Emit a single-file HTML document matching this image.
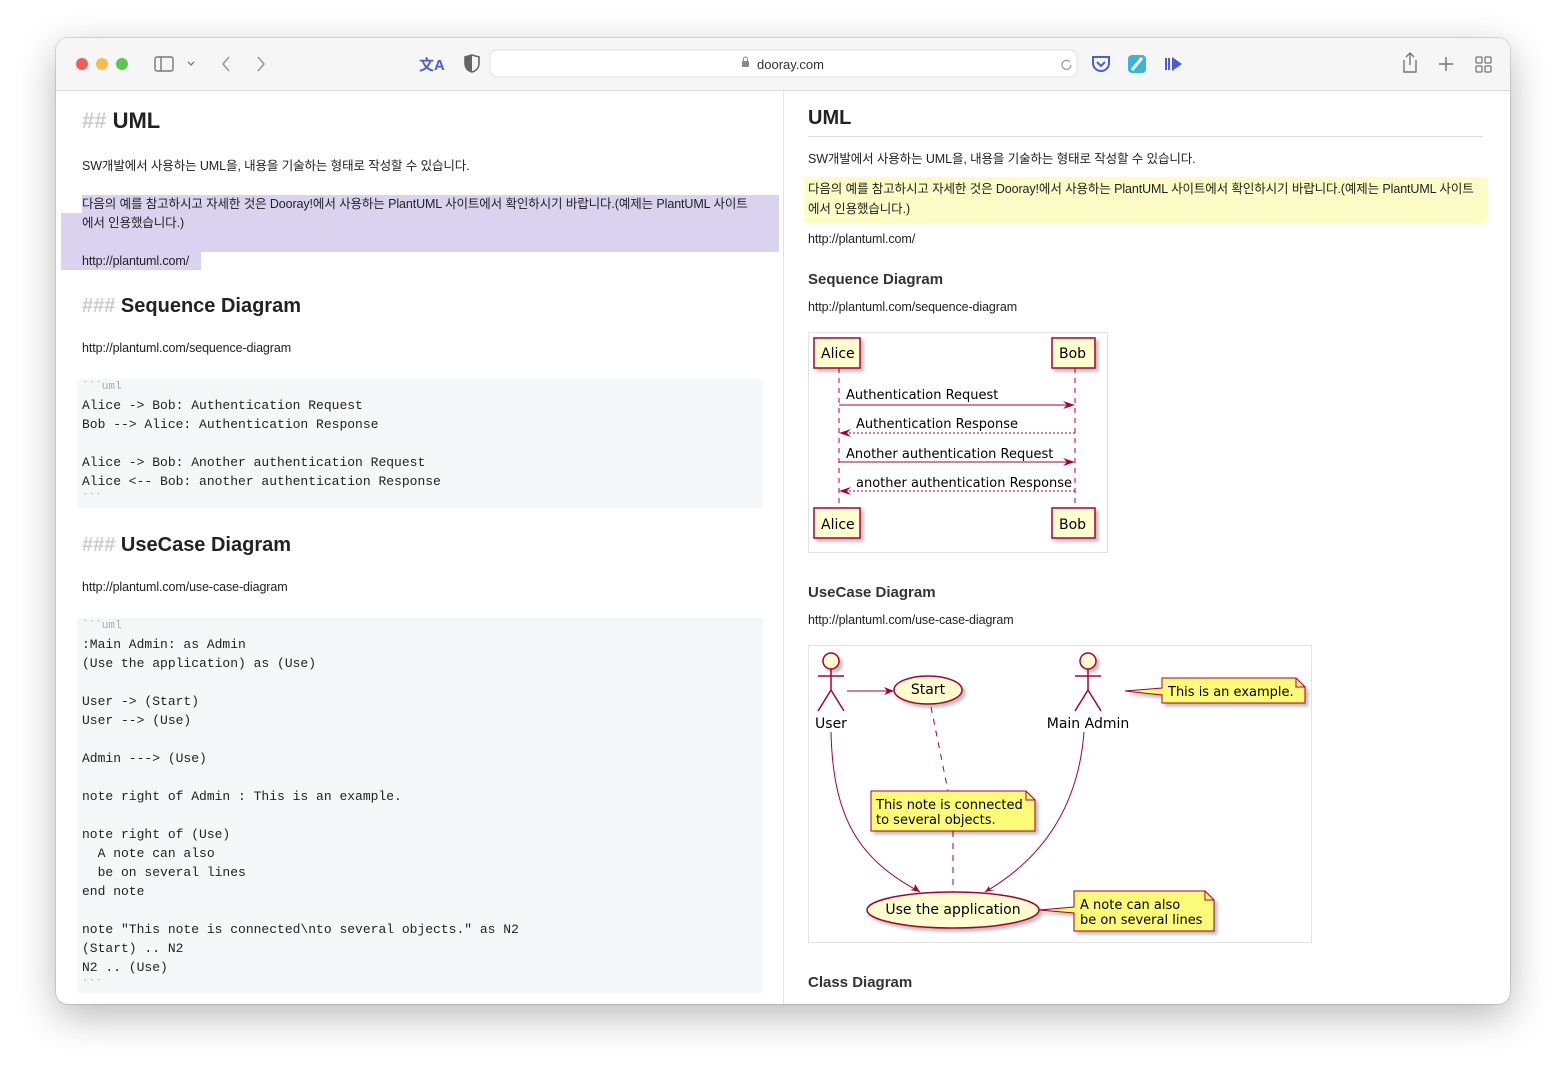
<!DOCTYPE html>
<html><head><meta charset="utf-8"><style>
*{margin:0;padding:0;box-sizing:border-box}
body{width:1566px;height:1078px;background:#fff;position:relative;overflow:hidden;font-family:"Liberation Sans","Noto Sans CJK KR",sans-serif;color:#222}
.win{position:absolute;left:56px;top:38px;width:1454px;height:966px;border-radius:12px;background:#fff;box-shadow:0 12px 40px rgba(0,0,0,.28),0 0 0 1px rgba(0,0,0,.12);overflow:hidden}
.tb{position:absolute;left:0;top:0;width:100%;height:53px;background:#f6f6f6;border-bottom:1px solid #dcdcdc}
.t{position:absolute;white-space:nowrap;font-size:12.5px;letter-spacing:-0.1px;line-height:18px}
.m{position:absolute;white-space:pre;font-family:"Liberation Mono",monospace;font-size:13px;line-height:18px;color:#222}
.g{color:#aaa;font-size:11px}
.h{position:absolute;white-space:nowrap;font-weight:bold}
.hl{position:absolute;background:#d9d3ef}
.code{position:absolute;left:77px;width:686px;background:#f6f7f9}
</style></head><body>
<div class="win">
 <div class="tb">
  <svg width="1454" height="53" style="position:absolute;left:0;top:0">
   <circle cx="26" cy="26" r="6" fill="#ee5f57"/><circle cx="46" cy="26" r="6" fill="#f5bd4f"/><circle cx="66" cy="26" r="6" fill="#5fc454"/>
   <rect x="99" y="19" width="18" height="14" rx="2" fill="none" stroke="#777" stroke-width="1.4"/><line x1="105" y1="19" x2="105" y2="33" stroke="#777" stroke-width="1.4"/>
   <path d="M132 24l3 3 3-3" fill="none" stroke="#777" stroke-width="1.3"/>
   <path d="M173 19l-6 7 6 7" fill="none" stroke="#999" stroke-width="1.6"/>
   <path d="M202 19l6 7-6 7" fill="none" stroke="#999" stroke-width="1.6"/>
   <text x="363" y="32" font-size="15" font-weight="bold" fill="#4a5cdb" font-family="Liberation Sans, Noto Sans CJK SC, sans-serif">文A</text>
   <path d="M409 19l7-2 7 2v6c0 5-3 8-7 9-4-1-7-4-7-9z" fill="none" stroke="#666" stroke-width="1.6"/><path d="M416 17v17c-4-1-7-4-7-9v-6z" fill="#666"/>
   <rect x="434" y="12" width="587" height="27" rx="7" fill="#fff" stroke="#e0e0e0"/>
   <rect x="686" y="23" width="7" height="6" rx="1" fill="#888"/><path d="M687.5 23v-2a2 2 0 0 1 4 0v2" fill="none" stroke="#888"/>
   <text x="701" y="31" font-size="13" fill="#333" font-family="Liberation Sans">dooray.com</text>
   <path d="M1014 24a4.5 4.5 0 1 0 1 3" fill="none" stroke="#999" stroke-width="1.2"/>
   <path d="M1037 19h16v6a8 8 0 0 1-16 0z" fill="none" stroke="#4a5cdb" stroke-width="2"/><path d="M1041 24l4 4 4-4" fill="none" stroke="#4a5cdb" stroke-width="2"/>
   <rect x="1072" y="17" width="18" height="18" rx="4" fill="#3bb4d8"/><path d="M1076 32l10-12" stroke="#fff" stroke-width="3"/>
   <path d="M1110 20v12M1113 20v12" stroke="#4a5cdb" stroke-width="2"/><path d="M1116 19l10 7-10 7z" fill="#4a5cdb"/>
   <path d="M1348 22v12h12V22M1354 15v12M1350 19l4-4 4 4" fill="none" stroke="#777" stroke-width="1.4"/>
   <path d="M1390 19v14M1383 26h14" stroke="#777" stroke-width="1.5"/>
   <g fill="none" stroke="#777" stroke-width="1.3"><rect x="1420" y="19" width="6" height="6" rx="1"/><rect x="1429" y="19" width="6" height="6" rx="1"/><rect x="1420" y="28" width="6" height="6" rx="1"/><rect x="1429" y="28" width="6" height="6" rx="1"/></g>
  </svg>
 </div>
 <div style="position:absolute;left:727px;top:53px;width:1px;height:913px;background:#e3e3e3"></div>
</div>

<div class="h" style="left:82px;top:108px;font-size:22px;line-height:26px"><span style="color:#ccc">##</span> UML</div>
<div class="t" style="left:82px;top:157px">SW개발에서 사용하는 UML을, 내용을 기술하는 형태로 작성할 수 있습니다.</div>
<div class="hl" style="left:82px;top:195px;width:697px;height:18px"></div>
<div class="hl" style="left:61px;top:213px;width:718px;height:39px"></div>
<div class="hl" style="left:61px;top:252px;width:140px;height:18px"></div>
<div class="t" style="left:82px;top:195px">다음의 예를 참고하시고 자세한 것은 Dooray!에서 사용하는 PlantUML 사이트에서 확인하시기 바랍니다.(예제는 PlantUML 사이트</div>
<div class="t" style="left:82px;top:214px">에서 인용했습니다.)</div>
<div class="t" style="left:82px;top:252px">http://plantuml.com/</div>
<div class="h" style="left:82px;top:294px;font-size:20px;line-height:24px"><span style="color:#ccc">###</span> Sequence Diagram</div>
<div class="t" style="left:82px;top:339px">http://plantuml.com/sequence-diagram</div>
<div class="code" style="top:379px;height:129px"></div>
<div class="m g" style="left:82px;top:378px">&#96;&#96;&#96;uml</div>
<div class="m" style="left:82px;top:397px">Alice -&gt; Bob: Authentication Request</div>
<div class="m" style="left:82px;top:416px">Bob --&gt; Alice: Authentication Response</div>
<div class="m" style="left:82px;top:454px">Alice -&gt; Bob: Another authentication Request</div>
<div class="m" style="left:82px;top:473px">Alice &lt;-- Bob: another authentication Response</div>
<div class="m g" style="left:82px;top:490px">&#96;&#96;&#96;</div>
<div class="h" style="left:82px;top:533px;font-size:20px;line-height:24px"><span style="color:#ccc">###</span> UseCase Diagram</div>
<div class="t" style="left:82px;top:578px">http://plantuml.com/use-case-diagram</div>
<div class="code" style="top:618px;height:375px"></div>
<div class="m g" style="left:82px;top:617px">&#96;&#96;&#96;uml</div>
<div class="m" style="left:82px;top:636px">:Main Admin: as Admin</div>
<div class="m" style="left:82px;top:655px">(Use the application) as (Use)</div>
<div class="m" style="left:82px;top:693px">User -&gt; (Start)</div>
<div class="m" style="left:82px;top:712px">User --&gt; (Use)</div>
<div class="m" style="left:82px;top:750px">Admin ---&gt; (Use)</div>
<div class="m" style="left:82px;top:788px">note right of Admin : This is an example.</div>
<div class="m" style="left:82px;top:826px">note right of (Use)</div>
<div class="m" style="left:82px;top:845px">  A note can also</div>
<div class="m" style="left:82px;top:864px">  be on several lines</div>
<div class="m" style="left:82px;top:883px">end note</div>
<div class="m" style="left:82px;top:921px">note "This note is connected\nto several objects." as N2</div>
<div class="m" style="left:82px;top:940px">(Start) .. N2</div>
<div class="m" style="left:82px;top:959px">N2 .. (Use)</div>
<div class="m g" style="left:82px;top:976px">&#96;&#96;&#96;</div>

<div class="h" style="left:808px;top:106px;font-size:20px;line-height:24px">UML</div>
<div style="position:absolute;left:808px;top:136px;width:675px;height:1px;background:#ddd"></div>
<div class="t" style="left:808px;top:150px">SW개발에서 사용하는 UML을, 내용을 기술하는 형태로 작성할 수 있습니다.</div>
<div style="position:absolute;left:804px;top:177px;width:684px;height:46px;background:#fcfcc6;border-radius:3px"></div>
<div class="t" style="left:808px;top:180px">다음의 예를 참고하시고 자세한 것은 Dooray!에서 사용하는 PlantUML 사이트에서 확인하시기 바랍니다.(예제는 PlantUML 사이트</div>
<div class="t" style="left:808px;top:200px">에서 인용했습니다.)</div>
<div class="t" style="left:808px;top:230px">http://plantuml.com/</div>
<div class="h" style="left:808px;top:271px;font-size:15px;line-height:18px;color:#333">Sequence Diagram</div>
<div class="t" style="left:808px;top:298px">http://plantuml.com/sequence-diagram</div>
<div class="h" style="left:808px;top:584px;font-size:15px;line-height:18px;color:#333">UseCase Diagram</div>
<div class="t" style="left:808px;top:611px">http://plantuml.com/use-case-diagram</div>
<div class="h" style="left:808px;top:974px;font-size:15px;line-height:18px;color:#333">Class Diagram</div>

<svg width="1566" height="1078" style="position:absolute;left:0;top:0" font-family="DejaVu Sans, sans-serif" font-size="13">
 <defs><filter id="s" x="-20%" y="-20%" width="150%" height="150%"><feDropShadow dx="3" dy="3" stdDeviation="1.5" flood-color="#000" flood-opacity=".25"/></filter></defs>
 <rect x="808.5" y="332.5" width="299" height="220" fill="none" stroke="#e3e3e3"/>
 <g stroke="#a80036" stroke-dasharray="5,5"><line x1="839" y1="368" x2="839" y2="508"/><line x1="1075" y1="368" x2="1075" y2="508"/></g>
 <g fill="#fefece" stroke="#a80036" stroke-width="1.5" filter="url(#s)">
  <rect x="814" y="338" width="46" height="30"/><rect x="1052" y="338" width="43" height="30"/>
  <rect x="814" y="508" width="46" height="30"/><rect x="1052" y="508" width="43" height="30"/></g>
 <g fill="#000" font-size="14"><text x="821" y="358">Alice</text><text x="1059" y="358">Bob</text><text x="821" y="529">Alice</text><text x="1059" y="529">Bob</text></g>
 <g stroke="#a80036"><line x1="839" y1="405" x2="1073" y2="405"/><line x1="841" y1="433" x2="1075" y2="433" stroke-dasharray="2,2"/><line x1="839" y1="462" x2="1073" y2="462"/><line x1="841" y1="491" x2="1075" y2="491" stroke-dasharray="2,2"/></g>
 <g fill="#a80036"><path d="M1075 405l-12-4 4 4-4 4z"/><path d="M839 433l12-4-4 4 4 4z"/><path d="M1075 462l-12-4 4 4-4 4z"/><path d="M839 491l12-4-4 4 4 4z"/></g>
 <g fill="#000"><text x="846" y="399">Authentication Request</text><text x="856" y="428">Authentication Response</text><text x="846" y="458">Another authentication Request</text><text x="856" y="487">another authentication Response</text></g>

 <rect x="808.5" y="645.5" width="503" height="297" fill="none" stroke="#e3e3e3"/>
 <g fill="none" stroke="#a80036" stroke-width="1.5">
  <circle cx="831" cy="661" r="8" fill="#fefece" filter="url(#s)"/><path d="M831 669v21M818 676h26M818 711l13-21 13 21"/>
  <circle cx="1088" cy="661" r="8" fill="#fefece" filter="url(#s)"/><path d="M1088 669v21M1075 676h26M1075 711l13-21 13 21"/>
 </g>
 <g fill="none" stroke="#a80036">
  <path d="M847 691h46"/><path d="M831 732C833 820 860 860 920 892"/><path d="M1084 732C1078 810 1040 860 985 892"/>
  <path d="M931 707L948 791M953 831V892" stroke-dasharray="6,6"/>
 </g>
 <g fill="#a80036"><path d="M894 691l-10-4 3 4-3 4z"/><path d="M920 892l-10-2 4-1 1-5z"/><path d="M985 892l4-6 1 4 5 0z"/></g>
 <g fill="#fefece" stroke="#a80036" stroke-width="1.5" filter="url(#s)"><ellipse cx="928" cy="690" rx="34" ry="14"/><ellipse cx="953" cy="910" rx="86" ry="18"/></g>
 <g fill="#fbfb77" stroke="#a80036" filter="url(#s)">
  <path d="M1162 678h134l9 9v16h-143v-8l-37-4 37-3z"/>
  <path d="M871 791h155l9 9v31h-164z"/>
  <path d="M1074 891h131l9 9v31h-140v-18l-35-3 35-3z"/>
 </g>
 <g fill="none" stroke="#a80036"><path d="M1296 678v9h9M1026 791v9h9M1205 891v9h9"/></g>
 <g fill="#000"><text x="831" y="728" text-anchor="middle" font-size="14">User</text><text x="1088" y="728" text-anchor="middle" font-size="14">Main Admin</text>
  <text x="928" y="694" text-anchor="middle" font-size="14">Start</text><text x="953" y="914" text-anchor="middle" font-size="14">Use the application</text>
  <text x="1168" y="696">This is an example.</text><text x="876" y="809">This note is connected</text><text x="876" y="824">to several objects.</text>
  <text x="1080" y="909">A note can also</text><text x="1080" y="924">be on several lines</text></g>
</svg>
</body></html>
